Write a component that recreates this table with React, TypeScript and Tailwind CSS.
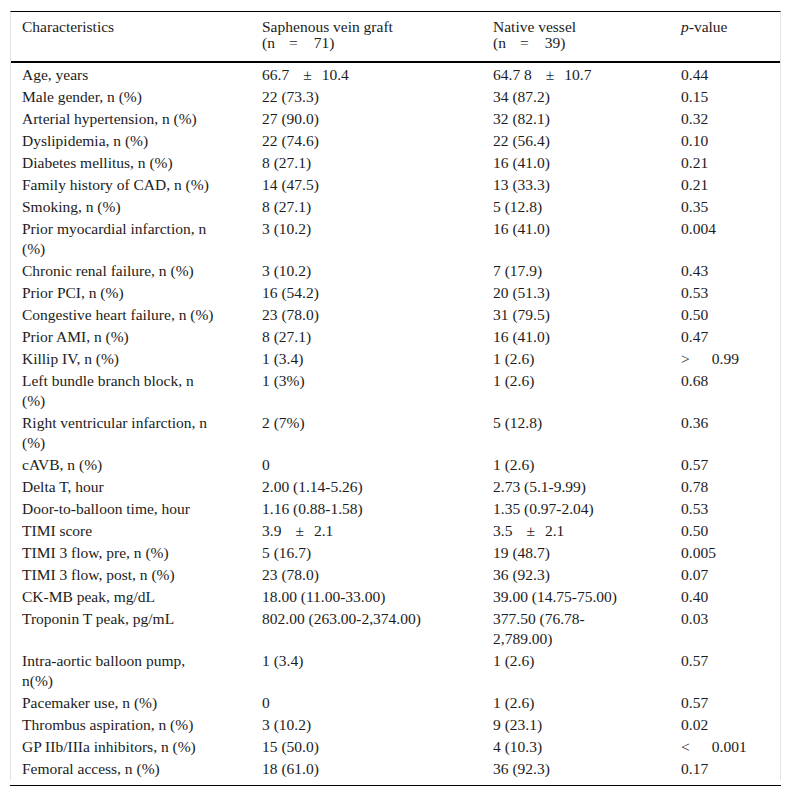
import type { ReactNode } from 'react'

const pm = (a: string, b: string) => (
  <>
    {a}
    <span className="ml-[14px] mr-[10px]">±</span>
    {b}
  </>
)

const rows: [ReactNode, ReactNode, ReactNode, ReactNode][] = [
  ['Age, years', pm('66.7', '10.4'), pm('64.7 8', '10.7'), '0.44'],
  ['Male gender, n (%)', '22 (73.3)', '34 (87.2)', '0.15'],
  ['Arterial hypertension, n (%)', '27 (90.0)', '32 (82.1)', '0.32'],
  ['Dyslipidemia, n (%)', '22 (74.6)', '22 (56.4)', '0.10'],
  ['Diabetes mellitus, n (%)', '8 (27.1)', '16 (41.0)', '0.21'],
  ['Family history of CAD, n (%)', '14 (47.5)', '13 (33.3)', '0.21'],
  ['Smoking, n (%)', '8 (27.1)', '5 (12.8)', '0.35'],
  [<>Prior myocardial infarction, n<br />(%)</>, '3 (10.2)', '16 (41.0)', '0.004'],
  ['Chronic renal failure, n (%)', '3 (10.2)', '7 (17.9)', '0.43'],
  ['Prior PCI, n (%)', '16 (54.2)', '20 (51.3)', '0.53'],
  ['Congestive heart failure, n (%)', '23 (78.0)', '31 (79.5)', '0.50'],
  ['Prior AMI, n (%)', '8 (27.1)', '16 (41.0)', '0.47'],
  ['Killip IV, n (%)', '1 (3.4)', '1 (2.6)', <><span className="mr-[22px]">&gt;</span>0.99</>],
  [<>Left bundle branch block, n<br />(%)</>, '1 (3%)', '1 (2.6)', '0.68'],
  [<>Right ventricular infarction, n<br />(%)</>, '2 (7%)', '5 (12.8)', '0.36'],
  ['cAVB, n (%)', '0', '1 (2.6)', '0.57'],
  ['Delta T, hour', '2.00 (1.14-5.26)', '2.73 (5.1-9.99)', '0.78'],
  ['Door-to-balloon time, hour', '1.16 (0.88-1.58)', '1.35 (0.97-2.04)', '0.53'],
  ['TIMI score', pm('3.9', '2.1'), pm('3.5', '2.1'), '0.50'],
  ['TIMI 3 flow, pre, n (%)', '5 (16.7)', '19 (48.7)', '0.005'],
  ['TIMI 3 flow, post, n (%)', '23 (78.0)', '36 (92.3)', '0.07'],
  ['CK-MB peak, mg/dL', '18.00 (11.00-33.00)', '39.00 (14.75-75.00)', '0.40'],
  ['Troponin T peak, pg/mL', '802.00 (263.00-2,374.00)', <>377.50 (76.78-<br />2,789.00)</>, '0.03'],
  [<>Intra-aortic balloon pump,<br />n(%)</>, '1 (3.4)', '1 (2.6)', '0.57'],
  ['Pacemaker use, n (%)', '0', '1 (2.6)', '0.57'],
  ['Thrombus aspiration, n (%)', '3 (10.2)', '9 (23.1)', '0.02'],
  ['GP IIb/IIIa inhibitors, n (%)', '15 (50.0)', '4 (10.3)', <><span className="mr-[22px]">&lt;</span>0.001</>],
  ['Femoral access, n (%)', '18 (61.0)', '36 (92.3)', '0.17'],
]

export default function App() {
  return (
    <div className="min-h-[797px] bg-white pl-[10px] pt-[11px] font-['Liberation_Serif',serif] text-[15.5px] text-[#1c1c1c]">
      <div className="w-[771px]">
        <div className="border-x border-t border-x-[#e4e4e4] border-t-black pb-px">
          <table className="w-full table-fixed border-collapse">
            <colgroup>
              <col className="w-[240px]" />
              <col className="w-[231px]" />
              <col className="w-[188px]" />
              <col />
            </colgroup>
            <thead>
              <tr className="border-b-2 border-black text-left align-top leading-[16px]">
                <th className="pb-[10px] pl-[11px] pt-[7px] font-normal">Characteristics</th>
                <th className="pb-[10px] pl-[11px] pt-[7px] font-normal">
                  Saphenous vein graft
                  <br />
                  (n<span className="ml-[14px] mr-[16px]">=</span>71)
                </th>
                <th className="pb-[10px] pl-[11px] pt-[7px] font-normal">
                  Native vessel
                  <br />
                  (n<span className="ml-[14px] mr-[16px]">=</span>39)
                </th>
                <th className="pb-[10px] pl-[11px] pt-[7px] font-normal">
                  <i>p</i>-value
                </th>
              </tr>
            </thead>
            <tbody>
              {rows.map((r, i) => (
                <tr key={i} className="align-top leading-[20px]">
                  {r.map((c, j) => (
                    <td key={j} className="whitespace-nowrap pl-[11px] pt-[2px]">
                      {c}
                    </td>
                  ))}
                </tr>
              ))}
            </tbody>
          </table>
        </div>
        <div className="mt-[5px] h-px bg-black" />
      </div>
    </div>
  )
}
